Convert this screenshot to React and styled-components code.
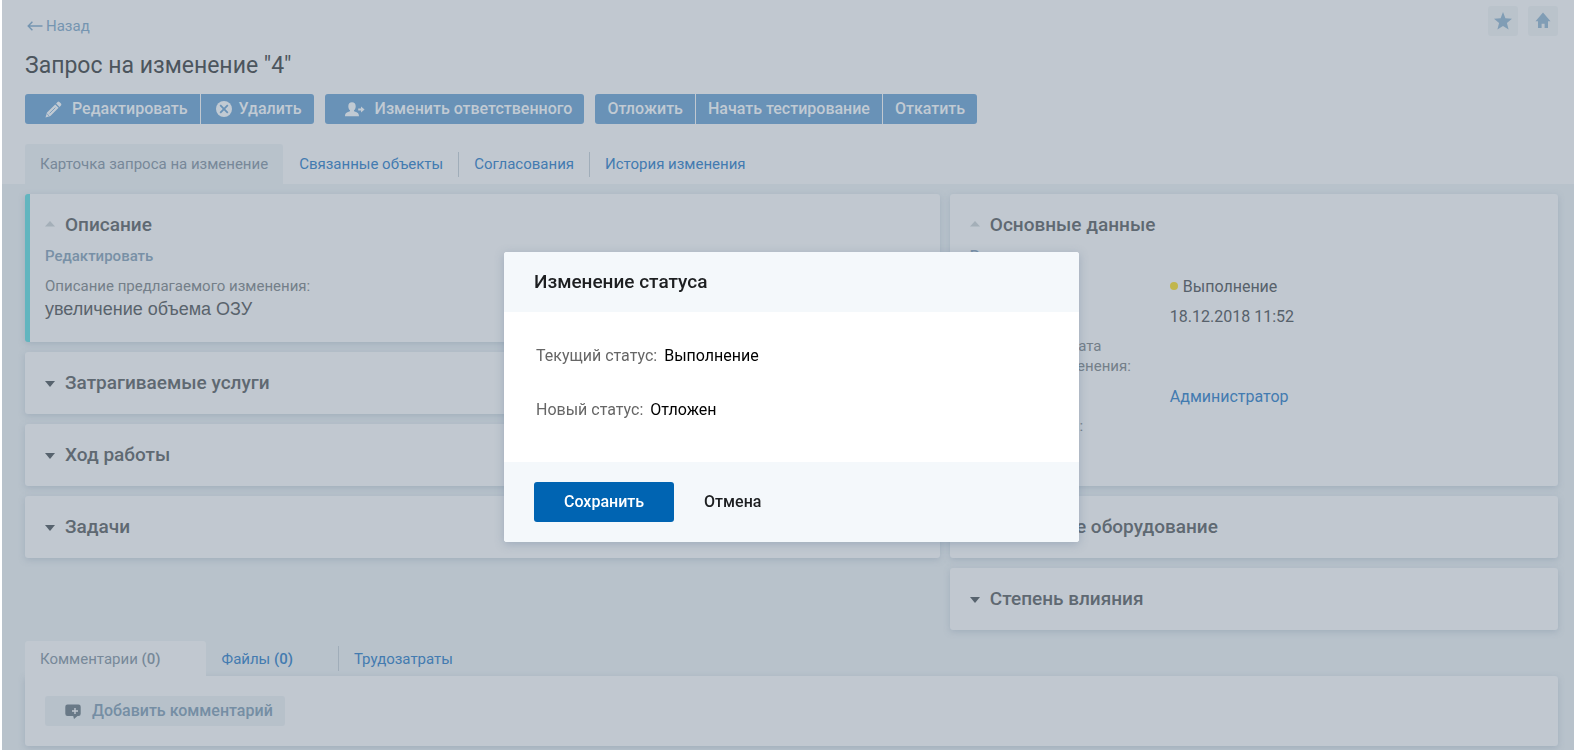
import React, { useState } from 'react'
import styled, { createGlobalStyle } from 'styled-components'

const mainTabs = ['Карточка запроса на изменение', 'Связанные объекты', 'Согласования', 'История изменения']
const leftCards = ['Затрагиваемые услуги', 'Ход работы', 'Задачи']
const rightCards = ['Связанное оборудование', 'Степень влияния']

const PencilIcon = () => (
  <svg width="17" height="17" viewBox="0 0 17 17" fill="currentColor" aria-hidden="true">
    <path d="M0.5 16.5 L2 11.6 L10.2 3.4 L13.6 6.8 L5.4 15 Z M11.1 2.5 L12.6 1 Q13.5 0.2 14.4 1 L16 2.6 Q16.8 3.5 16 4.4 L14.5 5.9 Z" />
    <path d="M2.2 13 L4 14.8 M4.6 12.4 L10.4 6.6" stroke="#6992b7" strokeWidth="0.8" />
  </svg>
)

const DeleteIcon = () => (
  <svg width="16" height="16" viewBox="0 0 16 16" aria-hidden="true">
    <circle cx="8" cy="8" r="8" fill="currentColor" />
    <path d="M4.2 4.2 L11.8 11.8 M11.8 4.2 L4.2 11.8" stroke="#6992b7" strokeWidth="1.8" />
  </svg>
)

const PersonIcon = () => (
  <svg width="20" height="15" viewBox="0 0 20 15" fill="currentColor" aria-hidden="true">
    <path d="M7 0.3 C9.3 0.3 10.7 1.8 10.7 4.2 C10.7 6 10 7.6 9 8.3 L9 9.3 C11.5 10.2 14 10.6 14 14.2 L0 14.2 C0 10.6 2.5 10.2 5 9.3 L5 8.3 C4 7.6 3.3 6 3.3 4.2 C3.3 1.8 4.7 0.3 7 0.3 Z" />
    <path d="M13.2 6.6 H16 V4.4 L19.6 7.5 L16 10.6 V8.4 H13.2 Z" />
  </svg>
)

const CommentIcon = () => (
  <svg width="16" height="15" viewBox="0 0 16 15" aria-hidden="true">
    <path d="M2.5 0.5 H13.5 Q15.7 0.5 15.7 2.7 V9.8 Q15.7 12 13.5 12 H12.5 L9 15 L8.2 12 H2.5 Q0.3 12 0.3 9.8 V2.7 Q0.3 0.5 2.5 0.5 Z" fill="#697987" />
    <path d="M10 4 V10 M7 7 H13" stroke="#c1c8d0" strokeWidth="1.4" />
  </svg>
)

const StarIcon = () => (
  <svg width="18" height="18" viewBox="0 0 18 18" fill="currentColor" aria-hidden="true">
    <path d="M9 0 L11.4 6.3 L18 6.7 L12.9 10.9 L14.6 17.5 L9 13.9 L3.4 17.5 L5.1 10.9 L0 6.7 L6.6 6.3 Z" />
  </svg>
)

const HomeIcon = () => (
  <svg width="16" height="18" viewBox="0 0 16 18" fill="currentColor" aria-hidden="true">
    <path d="M8 0.5 L15.5 9.3 H13 V16 H9.6 V11.8 H6.6 V16 H3 V9.3 H0.5 Z" />
  </svg>
)

const BackArrow = () => (
  <svg width="16" height="10" viewBox="0 0 16 10" fill="none" stroke="currentColor" strokeWidth="1.4" aria-hidden="true">
    <path d="M15.5 5 H1.2 M5.4 0.8 L1.2 5 L5.4 9.2" />
  </svg>
)

const Arrow = ({ open }) => (
  <svg width="10" height="10" viewBox="0 0 10 10" aria-hidden="true">
    {open ? <path d="M5 1 L10 6.5 H0 Z" fill="#a4afb8" /> : <path d="M0 3 H10 L5 9 Z" fill="#57636e" />}
  </svg>
)

function CardTitle({ title, open }) {
  return (
    <CardToggle type="button" aria-expanded={!!open}>
      <Arrow open={open} />
      <h2>{title}</h2>
    </CardToggle>
  )
}

export default function App() {
  const [dialogOpen, setDialogOpen] = useState(true)

  return (
    <>
      <GlobalStyle />
      <Page>
        <Header>
          <TopRow>
            <BackLink href="#back"><BackArrow />Назад</BackLink>
            <QuickButtons>
              <QuickButton type="button" aria-label="В избранное"><StarIcon /></QuickButton>
              <QuickButton type="button" aria-label="Домашняя страница"><HomeIcon /></QuickButton>
            </QuickButtons>
          </TopRow>
          <Title>Запрос на изменение "4"</Title>
          <Toolbar>
            <ButtonGroup>
              <ToolButton type="button" $icon="wide"><PencilIcon />Редактировать</ToolButton>
              <ToolButton type="button" $icon="narrow"><DeleteIcon />Удалить</ToolButton>
            </ButtonGroup>
            <ButtonGroup>
              <ToolButton type="button" $icon="wide"><PersonIcon />Изменить ответственного</ToolButton>
            </ButtonGroup>
            <ButtonGroup>
              <ToolButton type="button" onClick={() => setDialogOpen(true)}>Отложить</ToolButton>
              <ToolButton type="button">Начать тестирование</ToolButton>
              <ToolButton type="button">Откатить</ToolButton>
            </ButtonGroup>
          </Toolbar>
          <Tabs>
            {mainTabs.map((tab, i) => (
              <Tab key={tab} href={`#tab${i}`} $active={i === 0} $line={i > 1}>{tab}</Tab>
            ))}
          </Tabs>
        </Header>

        <Content>
          <Columns>
            <Column>
              <Card $accent>
                <CardTitle title="Описание" open />
                <EditLink href="#edit">Редактировать</EditLink>
                <Label>Описание предлагаемого изменения:</Label>
                <Description>увеличение объема ОЗУ</Description>
              </Card>
              {leftCards.map((title) => (
                <Card key={title}><CardTitle title={title} /></Card>
              ))}
            </Column>
            <Column>
              <Card>
                <CardTitle title="Основные данные" open />
                <EditLink href="#edit-main">Редактировать</EditLink>
                <Fields>
                  <dt>Статус:</dt>
                  <dd><Dot />Выполнение</dd>
                  <dt>Дата создания:</dt>
                  <dd>18.12.2018 11:52</dd>
                  <dt>Планируемая дата<br />внедрения изменения:</dt>
                  <dd />
                  <dt>Инициатор:</dt>
                  <dd><a href="#admin">Администратор</a></dd>
                  <dt>Ответственный:</dt>
                  <dd />
                  <dt>Приоритет:</dt>
                  <dd />
                </Fields>
              </Card>
              {rightCards.map((title) => (
                <Card key={title}><CardTitle title={title} /></Card>
              ))}
            </Column>
          </Columns>

          <Tabs $bottom>
            <Tab href="#comments" $active $bottom $counter>Комментарии&nbsp;<b>(0)</b></Tab>
            <Tab href="#files" $bottom $counter>Файлы&nbsp;<b>(0)</b></Tab>
            <Tab href="#labor" $bottom $line>Трудозатраты</Tab>
          </Tabs>
          <Panel>
            <CommentButton type="button"><CommentIcon />Добавить комментарий</CommentButton>
          </Panel>
        </Content>
      </Page>

      {dialogOpen && (
        <Overlay>
          <Dialog role="dialog" aria-modal="true" aria-labelledby="dialog-title">
            <DialogHeader id="dialog-title">Изменение статуса</DialogHeader>
            <DialogBody>
              <StatusRow><span>Текущий статус:</span>Выполнение</StatusRow>
              <StatusRow><span>Новый статус:</span>Отложен</StatusRow>
            </DialogBody>
            <DialogFooter>
              <SaveButton type="button" onClick={() => setDialogOpen(false)}>Сохранить</SaveButton>
              <CancelButton type="button" onClick={() => setDialogOpen(false)}>Отмена</CancelButton>
            </DialogFooter>
          </Dialog>
        </Overlay>
      )}
    </>
  )
}

const GlobalStyle = createGlobalStyle`
  * {
    box-sizing: border-box;
  }
  body {
    margin: 0;
    font-family: Roboto, "Liberation Sans", sans-serif;
    font-size: 15px;
    line-height: 20px;
    color: #57616b;
    background: #b8c2cb;
  }
  h1, h2, p, dl, dd {
    margin: 0;
  }
  a {
    color: #437bb0;
    text-decoration: none;
  }
  button {
    font: inherit;
    border: none;
    padding: 0;
    cursor: pointer;
  }
  svg {
    flex: none;
  }
`
const Page = styled.div`
  min-height: 100vh;
  border-left: 2px solid #fff;
  background: #b8c2cb;
`
const Header = styled.header`
  padding: 6px 16px 0 23px;
  background: #c1c8d0;
`
const TopRow = styled.div`
  display: flex;
  justify-content: space-between;
  align-items: flex-end;
`
const BackLink = styled.a`
  display: flex;
  align-items: center;
  gap: 3px;
  padding-left: 2px;
  color: #7595b1;
`
const QuickButtons = styled.div`
  display: flex;
  gap: 10px;
`
const QuickButton = styled.button`
  display: flex;
  align-items: center;
  justify-content: center;
  width: 30px;
  height: 30px;
  border-radius: 3px;
  background: #bac3cb;
  color: #809db5;
`
const Title = styled.h1`
  margin: 15px 0 13px;
  font-size: 23px;
  line-height: 30px;
  font-weight: 400;
  color: #4c555d;
`
const Toolbar = styled.div`
  display: flex;
  flex-wrap: wrap;
  gap: 11px;
`
const ButtonGroup = styled.div`
  display: flex;
  gap: 1px;
  border-radius: 3px;
  overflow: hidden;
`
const ToolButton = styled.button`
  display: flex;
  align-items: center;
  gap: ${({ $icon }) => ($icon === 'wide' ? '10px' : '7px')};
  height: 30px;
  padding: 0 12px;
  padding-left: ${({ $icon }) => ($icon === 'wide' ? '20px' : $icon === 'narrow' ? '15px' : '12px')};
  background: #6992b7;
  color: #c1cad3;
  font-size: 16px;
  font-weight: 500;
`
const Tabs = styled.nav`
  display: flex;
  margin-top: ${({ $bottom }) => ($bottom ? '11px' : '20px')};
`
const Tab = styled.a`
  display: flex;
  align-items: center;
  height: ${({ $bottom }) => ($bottom ? '35px' : '40px')};
  padding-right: ${({ $counter }) => ($counter ? '45px' : '15px')};
  border-radius: 3px 3px 0 0;
  color: ${({ $active }) => ($active ? '#778899' : '#437bb0')};
  background: ${({ $active, $bottom }) => ($active ? ($bottom ? '#c1c8d0' : '#b8c2cb') : 'transparent')};
  &::before {
    content: "";
    width: 1px;
    height: 25px;
    margin-right: ${({ $active }) => ($active ? '14px' : '15px')};
    background: ${({ $line }) => ($line ? '#a0adb9' : 'transparent')};
  }
  b {
    font-weight: 500;
  }
`
const Content = styled.main`
  padding: 10px 16px 4px 23px;
`
const Columns = styled.div`
  display: grid;
  grid-template-columns: calc(60% - 5px) 1fr;
  gap: 10px;
`
const Column = styled.div`
  display: flex;
  flex-direction: column;
  gap: 10px;
`
const Card = styled.section`
  padding: ${({ $accent }) => ($accent ? '20px 20px 20px 15px' : '20px')};
  border-left: ${({ $accent }) => ($accent ? '5px solid #62b5bf' : 'none')};
  border-radius: 3px;
  background: #c1c8d0;
  box-shadow: 0 2px 6px rgba(120, 140, 160, 0.35);
`
const CardToggle = styled.button`
  display: flex;
  align-items: center;
  gap: 10px;
  background: none;
  h2 {
    font-size: 19px;
    line-height: 22px;
    font-weight: 500;
    color: #5f6972;
  }
`
const EditLink = styled.a`
  display: block;
  margin: 10px 0;
  font-weight: 500;
  color: #7890a6;
`
const Label = styled.p`
  color: #747f89;
`
const Description = styled.p`
  font-family: "Liberation Sans", Arial, sans-serif;
  font-size: 18px;
  line-height: 26px;
  color: #59636c;
`
const Fields = styled.dl`
  display: grid;
  grid-template-columns: 200px 1fr;
  row-gap: 10px;
  dt {
    color: #747f89;
  }
  dd {
    display: flex;
    align-items: center;
    height: 20px;
    padding-top: 2px;
    font-size: 16px;
  }
`
const Dot = styled.span`
  width: 8px;
  height: 8px;
  margin: 0 5px 2px 0;
  border-radius: 50%;
  background: #c1b64c;
`
const Panel = styled.section`
  padding: 20px;
  border-radius: 0 3px 3px 3px;
  background: #c1c8d0;
  box-shadow: 0 2px 6px rgba(120, 140, 160, 0.35);
`
const CommentButton = styled.button`
  display: flex;
  align-items: center;
  gap: 11px;
  height: 30px;
  padding: 0 12px 0 20px;
  border-radius: 3px;
  background: #b7c1ca;
  color: #758ea4;
  font-size: 16px;
  font-weight: 500;
`
const Overlay = styled.div`
  position: fixed;
  inset: 0;
  display: flex;
  justify-content: center;
  align-items: flex-start;
  padding: 252px 16px 0 25px;
`
const Dialog = styled.div`
  width: 575px;
  max-width: 100%;
  border-radius: 3px;
  overflow: hidden;
  background: #fff;
  box-shadow: 0 2px 10px rgba(90, 115, 145, 0.35);
`
const DialogHeader = styled.h2`
  padding: 20px 30px;
  font-size: 19px;
  line-height: 20px;
  font-weight: 500;
  color: #1d1f21;
  background: #f4f8fb;
`
const DialogBody = styled.div`
  display: flex;
  flex-direction: column;
  gap: 34px;
  padding: 34px 32px 42px;
`
const StatusRow = styled.p`
  display: flex;
  gap: 7px;
  font-size: 16px;
  color: #000;
  span {
    color: #666;
  }
`
const DialogFooter = styled.div`
  display: flex;
  padding: 20px 30px;
  background: #f4f8fb;
`
const SaveButton = styled.button`
  height: 40px;
  padding: 0 30px;
  border-radius: 3px;
  background: #0064b2;
  color: #fff;
  font-size: 16px;
  font-weight: 500;
`
const CancelButton = styled.button`
  height: 40px;
  padding: 0 30px;
  background: none;
  color: #1d1f21;
  font-size: 16px;
  font-weight: 500;
`
